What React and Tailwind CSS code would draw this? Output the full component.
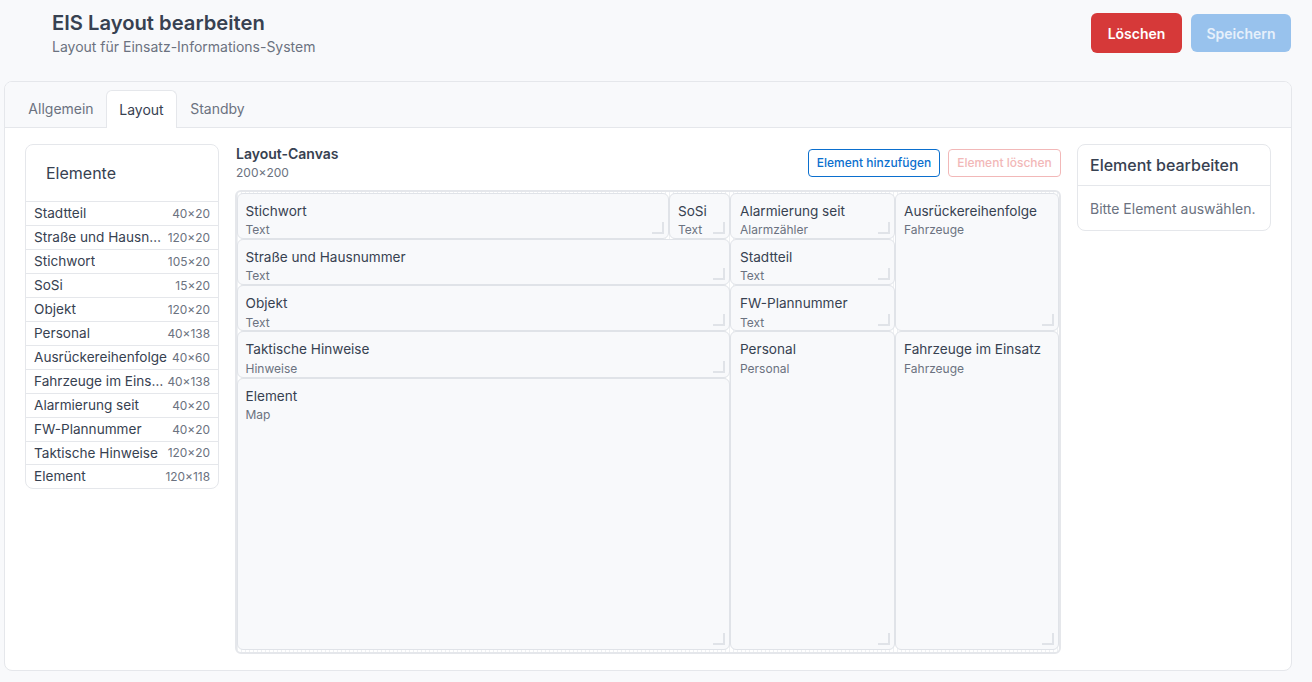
const items = [
  ["Stadtteil", "40×20"],
  ["Straße und Hausnummer", "120×20"],
  ["Stichwort", "105×20"],
  ["SoSi", "15×20"],
  ["Objekt", "120×20"],
  ["Personal", "40×138"],
  ["Ausrückereihenfolge", "40×60"],
  ["Fahrzeuge im Einsatz", "40×138"],
  ["Alarmierung seit", "40×20"],
  ["FW-Plannummer", "40×20"],
  ["Taktische Hinweise", "120×20"],
  ["Element", "120×118"],
];

function Tile({ title, type, place, pad = "pl-2", low }) {
  return (
    <div className={`relative min-w-0 overflow-hidden rounded-md border border-[#e0e3e8] bg-[#f8f9fb] pt-[8px] ${pad} ${place}`}>
      <div className="text-[13.6px] leading-[18px] text-[#374151] whitespace-nowrap">{title}</div>
      <div className={`text-[12px] leading-[18px] text-[#6b7280] whitespace-nowrap ${low ? "mt-[2px]" : "mt-[1px]"}`}>{type}</div>
      <div className="absolute bottom-[4px] right-[4px] h-3 w-3 border-b-2 border-r-2 border-[#e0e3e8]" />
    </div>
  );
}

export default function App() {
  const first = "pl-[7.5px]";
  const third = "pl-[9px]";
  return (
    <div className="h-[682px] w-[1312px] overflow-hidden bg-[#f8f9fb] font-['Inter',sans-serif] text-[#374151]">
      <header className="flex h-[81px] items-start justify-between pl-[52px] pr-[21px] pt-[13px]">
        <div>
          <h1 className="-mt-px text-[20.2px] font-semibold leading-[21px] text-[#374151]">EIS Layout bearbeiten</h1>
          <p className="mt-[5px] text-[14px] leading-[17px] text-[#6b7280]">Layout für Einsatz-Informations-System</p>
        </div>
        <div className="flex items-center gap-[9px]">
          <button className="h-10 w-[91px] rounded-md bg-[#d63939] text-[14px] font-semibold text-white">Löschen</button>
          <button className="h-[38px] w-[100px] rounded-md bg-[#98c2ed] text-[14px] font-semibold text-[#e6f0fb]">Speichern</button>
        </div>
      </header>

      <main className="mx-[4px] h-[590px] w-[1288px] overflow-hidden rounded-lg border border-[#e5e7eb] bg-white">
        <nav className="flex h-[46px] items-end border-b border-[#e5e7eb] bg-[#f8f9fb] pl-[11px]">
          <div className="flex h-[37px] w-[90px] items-center justify-center text-[14px] text-[#6b7280]">Allgemein</div>
          <div className="-mb-px flex h-[38px] w-[71px] items-center justify-center rounded-t-md border border-b-0 border-[#e5e7eb] bg-white text-[14px] text-[#374151]">Layout</div>
          <div className="flex h-[37px] w-[81px] items-center justify-center text-[14px] text-[#6b7280]">Standby</div>
        </nav>

        <div className="flex items-start pl-[20px] pt-[16px]">
          <aside className="w-[194px] shrink-0 overflow-hidden rounded-lg border border-[#e5e7eb] bg-white">
            <div className="flex h-[56px] items-center pl-5 text-[16px] text-[#374151]">Elemente</div>
            {items.map(([name, size], i) => (
              <div key={name} className={`flex items-center justify-between gap-[3px] border-t border-[#e5e7eb] px-2 text-[13.6px] ${i === 10 ? "h-[23px]" : "h-6"}`}>
                <span className="min-w-0 truncate text-[#374151]">{name}</span>
                <span className="shrink-0 text-[11.9px] text-[#6b7280]">{size}</span>
              </div>
            ))}
          </aside>

          <section className="ml-[16px] w-[826px] shrink-0">
            <div className="flex h-[46px] items-start justify-between">
              <div className="pl-px pt-px">
                <div className="text-[14px] font-semibold leading-[18px] text-[#374151]">Layout-Canvas</div>
                <div className="mt-[1px] text-[12px] leading-[18px] text-[#6b7280]">200×200</div>
              </div>
              <div className="mt-[5px] flex gap-2">
                <button className="h-7 w-[132px] rounded border border-[#0b6fce] bg-white text-[12px] font-medium text-[#0b6fce]">Element hinzufügen</button>
                <button className="h-7 w-[113px] rounded border border-[#f2b8b8] bg-white text-[12px] font-medium text-[#f2b8b8]">Element löschen</button>
              </div>
            </div>
            <div className="grid h-[464px] grid-cols-[432px_61px_165px_1fr] grid-rows-[46px_46.2px_46.2px_46.6px_1fr] rounded-md border-2 border-[#e5e7eb] bg-[repeating-linear-gradient(90deg,#eef0f3_0,#eef0f3_1px,transparent_1px,transparent_4px)] pb-[2px] pt-[1px]">
              <Tile title="Stichwort" type="Text" place="col-start-1 row-start-1" pad={first} />
              <Tile title="SoSi" type="Text" place="col-start-2 row-start-1" />
              <Tile title="Alarmierung seit" type="Alarmzähler" place="col-start-3 row-start-1" pad={third} />
              <Tile title="Ausrückereihenfolge" type="Fahrzeuge" place="col-start-4 row-start-1 row-span-3" />
              <Tile title="Straße und Hausnummer" type="Text" place="col-start-1 col-span-2 row-start-2" pad={first} />
              <Tile title="Stadtteil" type="Text" place="col-start-3 row-start-2" pad={third} />
              <Tile title="Objekt" type="Text" place="col-start-1 col-span-2 row-start-3" pad={first} low />
              <Tile title="FW-Plannummer" type="Text" place="col-start-3 row-start-3" pad={third} low />
              <Tile title="Taktische Hinweise" type="Hinweise" place="col-start-1 col-span-2 row-start-4" pad={first} low />
              <Tile title="Personal" type="Personal" place="col-start-3 row-start-4 row-span-2" pad={third} low />
              <Tile title="Fahrzeuge im Einsatz" type="Fahrzeuge" place="col-start-4 row-start-4 row-span-2" low />
              <Tile title="Element" type="Map" place="col-start-1 col-span-2 row-start-5" pad={first} />
            </div>
          </section>

          <aside className="ml-[16px] w-[194px] shrink-0 rounded-lg border border-[#e5e7eb] bg-white">
            <div className="flex h-[41px] items-center border-b border-[#e5e7eb] pl-3 text-[16px] font-medium text-[#374151]">Element bearbeiten</div>
            <div className="flex h-[44px] items-center pl-3 text-[14px] text-[#6b7280]">Bitte Element auswählen.</div>
          </aside>
        </div>
      </main>
    </div>
  );
}
